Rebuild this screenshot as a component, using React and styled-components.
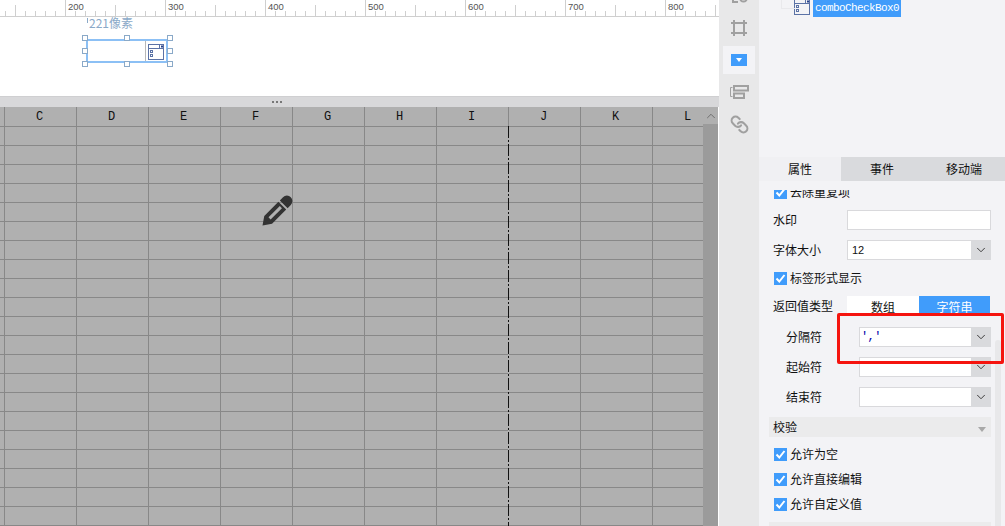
import React from "react"
import styled, { createGlobalStyle } from "styled-components"
import { Link, ChevronDown, ChevronUp } from "lucide-react"

const GlobalStyle = createGlobalStyle`
  html, body {
    margin: 0;
    padding: 0;
    background: #fff;
    overflow: hidden;
  }
  * {
    box-sizing: border-box;
  }
`

const COLUMNS = ["C", "D", "E", "F", "G", "H", "I", "J", "K", "L"]
const ROW_COUNT = 21
const cjk = `"Noto Sans CJK SC", "Liberation Sans", sans-serif`
const mono = `"Liberation Mono", "Noto Sans CJK SC", monospace`

const Page = styled.div`
  display: grid;
  grid-template-columns: 719px 40px 246px;
  width: 1005px;
  height: 526px;
  overflow: hidden;
  position: relative;
  font-family: ${cjk};
`
const Editor = styled.div`
  display: flex;
  flex-direction: column;
  height: 526px;
`
const RulerSvg = styled.svg`
  display: block;
  flex: none;
  width: 719px;
  height: 17px;
`
const Canvas = styled.div`
  flex: none;
  height: 79px;
  background: #fff;
  position: relative;
`
const SizeHint = styled.span`
  position: absolute;
  left: 89px;
  top: -1px;
  font-size: 12px;
  line-height: 14px;
  color: #8aa9c8;
  &::before {
    content: "";
    position: absolute;
    left: -2px;
    top: 2px;
    width: 1px;
    height: 5px;
    background: #8aa9c8;
  }
`
const Widget = styled.div`
  position: absolute;
  left: 86px;
  top: 22px;
  width: 82px;
  height: 24px;
  border: 2px solid #8cc0f5;
  background: #fff;
  display: flex;
  justify-content: flex-end;
  align-items: center;
  padding-right: 1px;
`
const WidgetSplit = styled.div`
  display: flex;
  align-items: center;
  justify-content: center;
  width: 20px;
  height: 20px;
  border-left: 1px solid #b8b8b8;
`
const Handle = styled.i`
  position: absolute;
  left: ${(p) => p.$x}px;
  top: ${(p) => p.$y}px;
  width: 6px;
  height: 6px;
  border: 1px solid #8aa9c8;
  background: #fff;
`
const Divider = styled.div`
  flex: none;
  height: 11px;
  background: #d8d8da;
  border-top: 1px solid #cfcfd1;
  display: flex;
  align-items: center;
  gap: 2px;
  padding-left: 272px;
`
const Dot = styled.i`
  width: 2px;
  height: 2px;
  background: #777;
`
const Sheet = styled.div`
  flex: 1;
  display: flex;
  position: relative;
  overflow: hidden;
`
const Grid = styled.div`
  flex: none;
  width: 703px;
  overflow: hidden;
  display: grid;
  grid-template-columns: 5px repeat(10, 72px);
  grid-template-rows: 20px repeat(${ROW_COUNT}, 19px);
  background: #b0b0b0;
`
const Cell = styled.div`
  border-right: 1px solid #888;
  border-bottom: 1px solid #888;
  display: flex;
  align-items: center;
  justify-content: center;
  padding-right: 2px;
  font-family: ${mono};
  font-size: 12px;
  color: #111;
`
const PageBreak = styled.div`
  position: absolute;
  left: 508px;
  top: 19px;
  bottom: 0;
  width: 1px;
  background: repeating-linear-gradient(
    to bottom,
    #111 0 12px,
    #b0b0b0 12px 14px,
    #111 14px 16px,
    #b0b0b0 16px 18px
  );
`
const Pencil = styled.svg`
  position: absolute;
  left: 262px;
  top: 88px;
  width: 32px;
  height: 32px;
`
const ScrollBar = styled.div`
  flex: none;
  width: 15px;
  margin-right: 1px;
  background: #9b9b9b;
`
const ScrollUp = styled.div`
  height: 17px;
  background: #b0b0b0;
  display: flex;
  align-items: center;
  justify-content: center;
  color: #666;
`
const Toolbar = styled.div`
  background: #e8e8e9;
  display: flex;
  flex-direction: column;
  align-items: center;
`
const ToolSlot = styled.div`
  flex: none;
  width: 32px;
  height: ${(p) => p.$h || 32}px;
  display: flex;
  align-items: ${(p) => (p.$clip ? "flex-start" : "center")};
  justify-content: center;
  overflow: hidden;
  background: ${(p) => (p.$active ? "#f3f3f6" : "transparent")};
  color: #a0a0a0;
`
const SelectedTool = styled.div`
  width: 16px;
  height: 12px;
  background: #409cfb;
  display: flex;
  align-items: center;
  justify-content: center;
  &::after {
    content: "";
    border-left: 3px solid transparent;
    border-right: 3px solid transparent;
    border-top: 4px solid #fff;
  }
`
const Side = styled.div`
  background: #f3f3f6;
  display: flex;
  flex-direction: column;
  height: 526px;
  position: relative;
`
const Tree = styled.div`
  flex: none;
  height: 157px;
  display: flex;
  align-items: flex-start;
  padding-left: 34px;
  gap: 3px;
  position: relative;
  &::before {
    content: "";
    position: absolute;
    left: 22px;
    top: 0;
    width: 13px;
    height: 8px;
    border-left: 1px solid #e9e9ec;
    border-bottom: 1px solid #e9e9ec;
  }
`
const TreeIcon = styled.div`
  margin-top: -2px;
  display: flex;
`
const TreeLabel = styled.span`
  height: 17px;
  width: 88px;
  padding-left: 2px;
  background: #409cfb;
  color: #fff;
  font-family: ${mono};
  font-size: 11px;
  letter-spacing: -0.6px;
  line-height: 17px;
  white-space: nowrap;
  overflow: hidden;
`
const Tabs = styled.div`
  flex: none;
  height: 24px;
  display: grid;
  grid-template-columns: 82px 82px 82px;
  background: #d9dadd;
`
const Tab = styled.div`
  display: flex;
  align-items: center;
  justify-content: center;
  padding-bottom: 2px;
  font-size: 12px;
  color: #111;
  background: ${(p) => (p.$active ? "#f0f0f3" : "transparent")};
`
const Form = styled.div`
  flex: none;
  margin-top: 9px;
  height: 336px;
  overflow: hidden;
  padding: 0 14px 0 10px;
  display: flex;
  flex-direction: column;
`
const CheckRow = styled.div`
  flex: none;
  display: flex;
  align-items: center;
  gap: 3px;
  height: 14px;
  padding-left: 5px;
  margin-top: ${(p) => p.$top || 0}px;
  font-size: 12px;
  color: #111;
`
const CheckText = styled.span`
  margin-top: -2px;
  white-space: nowrap;
`
const Box = styled.span`
  flex: none;
  width: 13px;
  height: 13px;
  background: #409cfb;
  display: flex;
  align-items: center;
  justify-content: center;
`
const FieldRow = styled.div`
  flex: none;
  display: flex;
  align-items: center;
  height: 20px;
  margin-top: ${(p) => p.$top || 0}px;
`
const Label = styled.label`
  flex: none;
  width: ${(p) => (p.$sub ? 90 : 78)}px;
  padding-left: ${(p) => (p.$sub ? 17 : 4)}px;
  padding-bottom: 2px;
  font-size: 12px;
  color: #111;
  white-space: nowrap;
`
const Input = styled.div`
  width: ${(p) => (p.$sub ? 132 : 144)}px;
  height: 20px;
  background: #fff;
  border: 1px solid #d9d9dc;
`
const Select = styled.div`
  width: ${(p) => (p.$sub ? 132 : 144)}px;
  height: 20px;
  background: #fff;
  border: 1px solid #d9d9dc;
  border-right: 0;
  display: flex;
  align-items: center;
`
const SelectValue = styled.span`
  flex: 1;
  padding-left: ${(p) => (p.$quoted ? 1 : 4)}px;
  padding-bottom: 1px;
  font-family: ${(p) => (p.$quoted ? mono : `"Liberation Sans", sans-serif`)};
  font-size: ${(p) => (p.$quoted ? 12 : 11)}px;
  letter-spacing: ${(p) => (p.$quoted ? "-0.6px" : "0")};
  color: ${(p) => (p.$quoted ? "#00a" : "#111")};
`
const SelectButton = styled.span`
  flex: none;
  width: 20px;
  height: 19px;
  background: #d9dadd;
  color: #333;
  display: flex;
  align-items: center;
  justify-content: center;
`
const Segments = styled.div`
  width: 143px;
  height: 20px;
  display: grid;
  grid-template-columns: 72px 71px;
`
const Segment = styled.div`
  display: flex;
  align-items: center;
  justify-content: center;
  font-size: 12px;
  background: ${(p) => (p.$on ? "#409cfb" : "#fff")};
  color: ${(p) => (p.$on ? "#fff" : "#111")};
`
const Section = styled.div`
  flex: none;
  height: 20px;
  margin-top: 10px;
  background: #ebebec;
  display: flex;
  align-items: center;
  justify-content: space-between;
  padding: 0 5px 2px 4px;
  font-size: 12px;
  color: #111;
  &::after {
    content: "";
    margin-top: 6px;
    border-left: 4px solid transparent;
    border-right: 4px solid transparent;
    border-top: 5px solid #a8a8a8;
  }
`
const SectionEnd = styled.div`
  flex: none;
  height: 20px;
  margin-top: 11px;
  background: #ebebec;
`
const SideScroll = styled.div`
  position: absolute;
  left: 236px;
  top: 340px;
  bottom: 0;
  width: 6px;
  border-radius: 3px 3px 0 0;
  background: #e8e8ea;
`
const RedBox = styled.div`
  position: absolute;
  left: 837px;
  top: 313px;
  width: 167px;
  height: 51px;
  border: 3px solid #f5140f;
  border-radius: 2px;
`

const Ruler = () => {
  const ticks = []
  for (let x = 5; x < 719; x += 10) {
    const major = (x - 65) % 100 === 0
    const mid = (x - 65) % 50 === 0
    ticks.push(
      <line
        key={x}
        x1={x + 0.5}
        x2={x + 0.5}
        y1={major ? 0 : mid ? 5 : 11}
        y2={16}
        stroke="#cfcfcf"
      />
    )
  }
  return (
    <RulerSvg viewBox="0 0 719 17">
      {ticks}
      <line x1="0" x2="719" y1="16.5" y2="16.5" stroke="#cfcfcf" />
      {[200, 300, 400, 500, 600, 700, 800].map((n, i) => (
        <text
          key={n}
          x={68 + i * 100}
          y={10}
          fontFamily="Liberation Sans, sans-serif"
          fontSize="9.5"
          fill="#555"
        >
          {n}
        </text>
      ))}
    </RulerSvg>
  )
}

const ComboIcon = () => (
  <svg width="17" height="17" viewBox="0 0 17 17" fill="none" stroke="#5b72a6">
    <rect x="1.5" y="1.5" width="15" height="15" />
    <path d="M1.5 5.5H16.5M12.5 1.5V5.5" />
    <rect x="14" y="2.5" width="2" height="2" fill="#26408a" stroke="none" />
    <rect x="3.5" y="7.5" width="2" height="2" />
    <rect x="3.5" y="11.5" width="2" height="2" />
  </svg>
)

const Check = () => (
  <Box>
    <svg width="11" height="11" viewBox="0 0 11 11" fill="none" stroke="#fff" strokeWidth="2">
      <path d="M1.5 5.5L4.3 8.5L9.5 2" />
    </svg>
  </Box>
)

const Chevron = () => (
  <SelectButton>
    <ChevronDown size={14} strokeWidth={1.6} />
  </SelectButton>
)

export default function App() {
  const handles = []
  ;[82, 124, 167].forEach((x) =>
    [18, 31, 44].forEach((y) => {
      if (x !== 124 || y !== 31) handles.push([x, y])
    })
  )

  const cells = []
  for (let r = 0; r <= ROW_COUNT; r++) {
    cells.push(<Cell key={`${r}-stub`} />)
    COLUMNS.forEach((c) =>
      cells.push(<Cell key={`${r}-${c}`}>{r === 0 ? c : null}</Cell>)
    )
  }

  return (
    <Page>
      <GlobalStyle />
      <Editor>
        <Ruler />
        <Canvas>
          <SizeHint>221像素</SizeHint>
          <Widget>
            <WidgetSplit>
              <ComboIcon />
            </WidgetSplit>
          </Widget>
          {handles.map(([x, y]) => (
            <Handle key={`${x}-${y}`} $x={x} $y={y} />
          ))}
        </Canvas>
        <Divider>
          <Dot />
          <Dot />
          <Dot />
        </Divider>
        <Sheet>
          <Grid>{cells}</Grid>
          <ScrollBar>
            <ScrollUp>
              <ChevronUp size={14} strokeWidth={1.5} />
            </ScrollUp>
          </ScrollBar>
          <PageBreak />
          <Pencil viewBox="0 0 32 32">
            <g transform="translate(0.5 30.5) rotate(-45)">
              <path
                fill="#333"
                d="M0 0L8 -5.5H28V5.5H8Z M30 -5.5H34.5A5.5 5.5 0 0 1 34.5 5.5H30Z"
              />
              <rect x="10" y="-1.5" width="16" height="3" fill="#b0b0b0" />
            </g>
          </Pencil>
        </Sheet>
      </Editor>

      <Toolbar>
        <ToolSlot $clip $h={10}>
          <svg width="17" height="10" viewBox="0 0 17 10" fill="none" stroke="#a0a0a0" strokeWidth="2">
            <path d="M2 -6V2H7" />
            <circle cx="12.5" cy="-2" r="3.5" />
          </svg>
        </ToolSlot>
        <ToolSlot $h={36}>
          <svg width="16" height="16" viewBox="0 0 16 16" fill="none" stroke="#a0a0a0" strokeWidth="2">
            <path d="M0 3H16M0 13H16M3 0V16M13 0V16" />
          </svg>
        </ToolSlot>
        <ToolSlot $active $h={28}>
          <SelectedTool />
        </ToolSlot>
        <ToolSlot $h={36}>
          <svg width="20" height="14" viewBox="0 0 20 14" fill="none" stroke="#a0a0a0">
            <path d="M3.5 2.5H1.5V11.5H3.5" />
            <rect x="5" y="1" width="14" height="4.5" strokeWidth="2" />
            <rect x="5" y="8.5" width="10" height="4.5" strokeWidth="2" />
          </svg>
        </ToolSlot>
        <ToolSlot $h={28}>
          <Link size={19} strokeWidth={2.6} style={{ transform: "scaleX(-1)" }} />
        </ToolSlot>
      </Toolbar>

      <Side>
        <Tree>
          <TreeIcon>
            <ComboIcon />
          </TreeIcon>
          <TreeLabel>comboCheckBox0</TreeLabel>
        </Tree>
        <Tabs>
          <Tab $active>属性</Tab>
          <Tab>事件</Tab>
          <Tab>移动端</Tab>
        </Tabs>
        <Form>
          <CheckRow $top={-5}>
            <Check />
            <CheckText>去除重复项</CheckText>
          </CheckRow>
          <FieldRow $top={11}>
            <Label>水印</Label>
            <Input />
          </FieldRow>
          <FieldRow $top={10}>
            <Label>字体大小</Label>
            <Select>
              <SelectValue>12</SelectValue>
              <Chevron />
            </Select>
          </FieldRow>
          <CheckRow $top={11}>
            <Check />
            <CheckText>标签形式显示</CheckText>
          </CheckRow>
          <FieldRow $top={11}>
            <Label>返回值类型</Label>
            <Segments>
              <Segment>数组</Segment>
              <Segment $on>字符串</Segment>
            </Segments>
          </FieldRow>
          <FieldRow $top={11}>
            <Label $sub>分隔符</Label>
            <Select $sub>
              <SelectValue $quoted>','</SelectValue>
              <Chevron />
            </Select>
          </FieldRow>
          <FieldRow $top={10}>
            <Label $sub>起始符</Label>
            <Select $sub>
              <SelectValue />
              <Chevron />
            </Select>
          </FieldRow>
          <FieldRow $top={10}>
            <Label $sub>结束符</Label>
            <Select $sub>
              <SelectValue />
              <Chevron />
            </Select>
          </FieldRow>
          <Section>校验</Section>
          <CheckRow $top={10}>
            <Check />
            <CheckText>允许为空</CheckText>
          </CheckRow>
          <CheckRow $top={11}>
            <Check />
            <CheckText>允许直接编辑</CheckText>
          </CheckRow>
          <CheckRow $top={11}>
            <Check />
            <CheckText>允许自定义值</CheckText>
          </CheckRow>
          <SectionEnd />
        </Form>
        <SideScroll />
      </Side>
      <RedBox />
    </Page>
  )
}
